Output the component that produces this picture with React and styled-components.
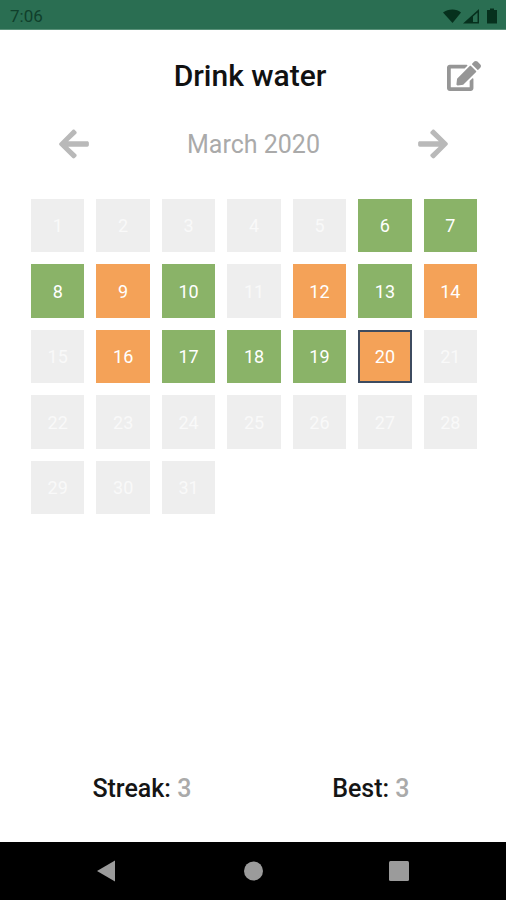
import styled, { createGlobalStyle } from "styled-components";
import { FaArrowLeft, FaArrowRight, FaEdit } from "react-icons/fa";

const GlobalStyle = createGlobalStyle`
  * {
    box-sizing: border-box;
  }

  body {
    margin: 0;
    background: #fff;
    font-family: Roboto, "Liberation Sans", sans-serif;
  }
`;

const Screen = styled.div`
  display: flex;
  flex-direction: column;
  min-height: 100vh;
`;

const StatusBar = styled.div`
  display: flex;
  justify-content: space-between;
  align-items: center;
  height: 30px;
  padding: 2px 8px 0 10px;
  border-bottom: 1px solid #5a9179;
  background: #2a6e52;
  color: #103f2b;
  font-size: 17px;
`;

const StatusIcons = styled.svg`
  width: 56px;
  height: 16px;
  fill: #06301d;
`;

const Content = styled.main`
  display: flex;
  flex-direction: column;
  flex: 1;
`;

const Header = styled.header`
  display: grid;
  grid-template-columns: 36px 1fr 36px;
  align-items: center;
  padding: 28px 24px 0 18px;
`;

const Title = styled.h1`
  grid-column: 2;
  margin: 0;
  font-size: 30px;
  font-weight: 500;
  line-height: 36px;
  text-align: center;
  color: #111;
`;

const IconButton = styled.button`
  display: flex;
  justify-content: center;
  align-items: center;
  width: 36px;
  height: 36px;
  padding: 0;
  border: none;
  background: none;
  color: ${({ $color }) => $color};
  font-size: 34px;
  cursor: pointer;
`;

const MonthBar = styled.div`
  display: flex;
  justify-content: space-between;
  align-items: center;
  padding: 0 55px 0 56px;
  margin-top: 32px;
`;

const Month = styled.h2`
  margin: 0;
  padding-top: 2px;
  font-size: 25px;
  font-weight: 400;
  line-height: 34px;
  color: #aaa;
`;

const Calendar = styled.div`
  display: grid;
  grid-template-columns: repeat(7, 1fr);
  gap: 12px;
  padding: 0 29px 0 31px;
  margin-top: 37px;
`;

const dayColors = {
  done: "#8ab368",
  missed: "#f4a258",
  empty: "#eee",
};

const Day = styled.button`
  aspect-ratio: 1;
  padding: 0;
  border: ${({ $today }) => ($today ? "2px solid #3d4b60" : "none")};
  background: ${({ $status }) => dayColors[$status]};
  color: ${({ $status }) => ($status === "empty" ? "#f9f9f9" : "#fff")};
  font-family: inherit;
  font-size: 18px;
  font-weight: 400;
  cursor: pointer;
`;

const Stats = styled.div`
  display: flex;
  justify-content: space-around;
  padding: 0 26px 0 22px;
  margin-top: auto;
  margin-bottom: 37px;
`;

const Stat = styled.div`
  font-size: 25px;
  font-weight: 500;
  line-height: 32px;
  color: #151515;
`;

const StatValue = styled.span`
  color: #aaa;
`;

const NavBar = styled.nav`
  display: grid;
  grid-template-columns: repeat(3, 1fr);
  height: 58px;
  padding: 0 34px;
  background: #000;
`;

const NavButton = styled.button`
  display: flex;
  justify-content: center;
  align-items: center;
  padding: 0;
  border: none;
  background: none;
  cursor: pointer;

  svg {
    width: 22px;
    height: 22px;
    fill: #9b9b9b;
  }
`;

const DAYS_IN_MONTH = 31;
const TODAY = 20;
const done = [6, 7, 8, 10, 13, 17, 18, 19];
const missed = [9, 12, 14, 16, 20];

const days = Array.from({ length: DAYS_IN_MONTH }, (_, i) => i + 1);

function getStatus(day) {
  if (done.includes(day)) return "done";
  if (missed.includes(day)) return "missed";
  return "empty";
}

function App() {
  return (
    <Screen>
      <GlobalStyle />
      <StatusBar>
        <span>7:06</span>
        <StatusIcons viewBox="0 0 56 16" aria-hidden="true">
          <path d="M1 4.500C6 0.500 15 0.500 19 4.500L10.500 15Z" />
          <path
            fillRule="evenodd"
            d="M21 15.500L37 1V15.500ZM31 8.500V14H35.500V4.500Z"
          />
          <path d="M48 2V0.500H52V2H55V15.500H45V2Z" />
        </StatusIcons>
      </StatusBar>
      <Content>
        <Header>
          <Title>Drink water</Title>
          <IconButton $color="#969696" aria-label="Edit habit">
            <FaEdit />
          </IconButton>
        </Header>
        <MonthBar>
          <IconButton $color="#b9b9b9" aria-label="Previous month">
            <FaArrowLeft />
          </IconButton>
          <Month>March 2020</Month>
          <IconButton $color="#b9b9b9" aria-label="Next month">
            <FaArrowRight />
          </IconButton>
        </MonthBar>
        <Calendar>
          {days.map((day) => (
            <Day key={day} $status={getStatus(day)} $today={day === TODAY}>
              {day}
            </Day>
          ))}
        </Calendar>
        <Stats>
          <Stat>
            Streak: <StatValue>3</StatValue>
          </Stat>
          <Stat>
            Best: <StatValue>3</StatValue>
          </Stat>
        </Stats>
      </Content>
      <NavBar>
        <NavButton aria-label="Back">
          <svg viewBox="0 0 22 22">
            <path d="M1 11L19 0.500V21.500Z" />
          </svg>
        </NavButton>
        <NavButton aria-label="Home">
          <svg viewBox="0 0 22 22">
            <circle cx="11.500" cy="11" r="9.500" />
          </svg>
        </NavButton>
        <NavButton aria-label="Recent apps">
          <svg viewBox="0 0 22 22">
            <rect x="1" y="1" width="20" height="20" rx="1.500" />
          </svg>
        </NavButton>
      </NavBar>
    </Screen>
  );
}

export default App;
